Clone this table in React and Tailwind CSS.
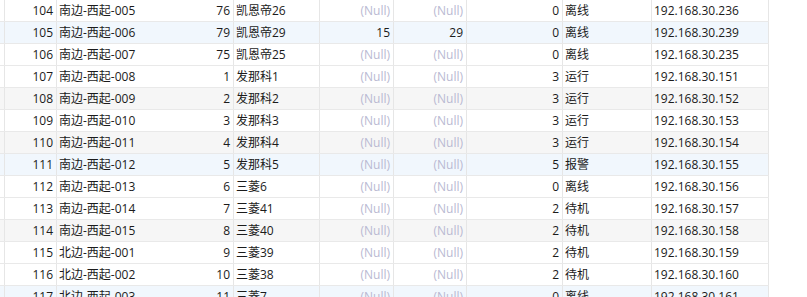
import React from "react";

const rows = [
  [104, "南边-西起-005", 76, "凯恩帝26", null, null, 0, "离线", "192.168.30.236", "w"],
  [105, "南边-西起-006", 79, "凯恩帝29", 15, 29, 0, "离线", "192.168.30.239", "b"],
  [106, "南边-西起-007", 75, "凯恩帝25", null, null, 0, "离线", "192.168.30.235", "w"],
  [107, "南边-西起-008", 1, "发那科1", null, null, 3, "运行", "192.168.30.151", "w"],
  [108, "南边-西起-009", 2, "发那科2", null, null, 3, "运行", "192.168.30.152", "g"],
  [109, "南边-西起-010", 3, "发那科3", null, null, 3, "运行", "192.168.30.153", "w"],
  [110, "南边-西起-011", 4, "发那科4", null, null, 3, "运行", "192.168.30.154", "g"],
  [111, "南边-西起-012", 5, "发那科5", null, null, 5, "报警", "192.168.30.155", "b"],
  [112, "南边-西起-013", 6, "三菱6", null, null, 0, "离线", "192.168.30.156", "w"],
  [113, "南边-西起-014", 7, "三菱41", null, null, 2, "待机", "192.168.30.157", "w"],
  [114, "南边-西起-015", 8, "三菱40", null, null, 2, "待机", "192.168.30.158", "g"],
  [115, "北边-西起-001", 9, "三菱39", null, null, 2, "待机", "192.168.30.159", "w"],
  [116, "北边-西起-002", 10, "三菱38", null, null, 2, "待机", "192.168.30.160", "w"],
  [117, "北边-西起-003", 11, "三菱7", null, null, 0, "离线", "192.168.30.161", "b"],
];

const bgMap = { w: "bg-white", b: "bg-[#f1f7fd]", g: "bg-[#f6f6f6]" };

function Num({ v }) {
  if (v === null) return <span className="text-[#b9b9d2]">(Null)</span>;
  return <span>{v}</span>;
}

export default function App() {
  return (
    <div
      className="w-[807px] h-[297px] overflow-hidden bg-white text-[12px] leading-none text-[#1b1b1b]"
      style={{ fontFamily: '"Open Sans", "Noto Sans CJK SC", sans-serif' }}
    >
      <div className="w-[769px] flex flex-col">
        {rows.map((r) => (
          <div
            key={r[0]}
            className={`flex h-[22px] border-b border-[#e9e9e9] ${bgMap[r[9]]}`}
          >
            <div className="w-[5px] border-r border-[#e6e6e6]" />
            <div className="w-[52px] border-r border-[#e6e6e6] flex items-center justify-end pr-[3px]">
              {r[0]}
            </div>
            <div className="w-[177px] border-r border-[#e6e6e6] flex items-center justify-between pl-[2px] pr-[3px]">
              <span>{r[1]}</span>
              <span>{r[2]}</span>
            </div>
            <div className="w-[86px] border-r border-[#e6e6e6] flex items-center pl-[2px]">
              {r[3]}
            </div>
            <div className="w-[74px] border-r border-[#e6e6e6] flex items-center justify-end pr-[3px]">
              <Num v={r[4]} />
            </div>
            <div className="w-[73px] border-r border-[#e6e6e6] flex items-center justify-end pr-[3px]">
              <Num v={r[5]} />
            </div>
            <div className="w-[96px] border-r border-[#e6e6e6] flex items-center justify-end pr-[3px]">
              {r[6]}
            </div>
            <div className="w-[89px] border-r border-[#e6e6e6] flex items-center pl-[2px]">
              {r[7]}
            </div>
            <div className="w-[117px] border-r border-[#e6e6e6] flex items-center pl-[2px]">
              {r[8]}
            </div>
          </div>
        ))}
      </div>
    </div>
  );
}
